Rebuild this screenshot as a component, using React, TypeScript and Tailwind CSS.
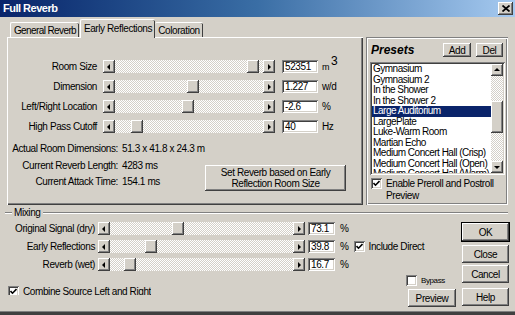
import React from 'react';

// classic win9x bevels
const raised = 'bg-[#d4d0c8] shadow-[inset_-1px_-1px_#404040,inset_1px_1px_#ffffff,inset_-2px_-2px_#808080]';
const sunken = 'bg-white shadow-[inset_1px_1px_#808080,inset_-1px_-1px_#ffffff,inset_2px_2px_#404040,inset_-2px_-2px_#d4d0c8]';
const track = 'bg-[image:repeating-conic-gradient(#d4d0c8_0_25%,#ffffff_0_50%)] bg-[length:2px_2px]';

const presets = [
  'Gymnasium',
  'Gymnasium 2',
  'In the Shower',
  'In the Shower 2',
  'Large Auditorium',
  'LargePlate',
  'Luke-Warm Room',
  'Martian Echo',
  'Medium Concert Hall (Crisp)',
  'Medium Concert Hall (Open)',
  'Medium Concert Hall (Warm)',
];

const reflections = [
  { label: 'Room Size', value: '52351', thumb: 132, unit: 'm3' },
  { label: 'Dimension', value: '1.227', thumb: 72, unit: 'w/d' },
  { label: 'Left/Right Location', value: '-2.6', thumb: 67, unit: '%' },
  { label: 'High Pass Cutoff', value: '40', thumb: 16, unit: 'Hz' },
];

const mixing = [
  { label: 'Original Signal (dry)', value: '73.1', thumb: 62 },
  { label: 'Early Reflections', value: '39.8', thumb: 35 },
  { label: 'Reverb (wet)', value: '16.7', thumb: 14 },
];

function Arrow({ dir, h = 13 }: { dir: 'left' | 'right' | 'up' | 'down'; h?: number }) {
  const pts = {
    left: '5,1 2,4 5,7',
    right: '3,1 6,4 3,7',
    up: '1,5 4,2 7,5',
    down: '1,3 4,6 7,3',
  }[dir];
  return (
    <div className={`flex w-[12px] shrink-0 items-center justify-center ${raised}`} style={{ height: h }}>
      <svg width="8" height="8" viewBox="0 0 8 8">
        <polygon points={pts} fill="#000" />
      </svg>
    </div>
  );
}

function Slider({ width, thumb }: { width: number; thumb: number }) {
  return (
    <div className="flex h-[13px]">
      <Arrow dir="left" />
      <div className={`flex h-[13px] ${track}`} style={{ width }}>
        <div className="shrink-0" style={{ width: thumb }} />
        <div className={`h-[13px] w-[12px] shrink-0 ${raised}`} />
      </div>
      <Arrow dir="right" />
    </div>
  );
}

function Check({ checked }: { checked?: boolean }) {
  return (
    <div className={`flex h-[11px] w-[11px] shrink-0 items-center justify-center ${sunken}`}>
      {checked && (
        <svg width="7" height="7" viewBox="0 0 7 7">
          <path d="M0.5 3 L2.5 5.2 L6.5 1" stroke="#000" strokeWidth="1.6" fill="none" />
        </svg>
      )}
    </div>
  );
}

function Btn({ children, className = '' }: { children: React.ReactNode; className?: string }) {
  return <div className={`flex items-center justify-center whitespace-nowrap ${raised} ${className}`}>{children}</div>;
}

export default function App() {
  return (
    <div className="flex h-[315px] w-[515px] flex-col overflow-hidden whitespace-nowrap bg-[#d4d0c8] font-['Liberation_Sans',Arial,sans-serif] text-[10px] tracking-[-0.4px] text-black">
      {/* title bar */}
      <div className="flex h-[17px] shrink-0 items-center bg-gradient-to-r from-[#0a246a] via-[#3a6ea5] to-[#a6caf0] pl-[3px] pr-[2px]">
        <span className="text-[11px] font-bold tracking-[-0.5px] text-white">Full Reverb</span>
        <div className={`ml-auto flex h-[13px] w-[15px] items-center justify-center ${raised}`}>
          <svg width="8" height="7" viewBox="0 0 8 7">
            <path d="M0.5 0.5 L7.5 6.5 M7.5 0.5 L0.5 6.5" stroke="#000" strokeWidth="1.7" />
          </svg>
        </div>
      </div>

      {/* top: tabs + presets */}
      <div className="flex shrink-0 pl-[7px] pt-[3px]">
        <div className="flex w-[356px] flex-col">
          <div className="flex h-[17px] items-end pl-[3px]">
            <div className="flex h-[15px] w-[69px] items-center justify-center rounded-t-[2px] border-l border-t border-white tracking-[-0.6px] shadow-[inset_-1px_0_#404040]">
              General Reverb
            </div>
            <div className="relative z-10 -mb-px ml-[1px] flex h-[19px] w-[75px] items-center justify-center rounded-t-[2px] border-l border-t border-white bg-[#d4d0c8] pb-[2px] shadow-[inset_-1px_0_#404040]">
              Early Reflections
            </div>
            <div className="flex h-[15px] w-[48px] items-center justify-center rounded-t-[2px] border-t border-white shadow-[inset_-1px_0_#404040]">
              Coloration
            </div>
          </div>
          <div className="flex h-[168px] flex-col shadow-[inset_1px_1px_#ffffff,inset_-1px_-1px_#404040,inset_-2px_-2px_#808080]">
            <div className="flex flex-col gap-[7px] pt-[23px]">
              {reflections.map((r) => (
                <div key={r.label} className="flex h-[13px] items-center">
                  <div className="w-[90px] text-right leading-[13px]">{r.label}</div>
                  <div className="ml-[6px]">
                    <Slider width={148} thumb={r.thumb} />
                  </div>
                  <div className={`ml-[7px] h-[13px] w-[36px] pl-[3px] leading-[13px] ${sunken}`}>{r.value}</div>
                  <div className="ml-[4px] leading-[13px]">
                    {r.unit === 'm3' ? (
                      <>
                        <span className="text-[9px]">m</span>
                        <span className="relative -top-[5px] ml-[2px] text-[12px]">3</span>
                      </>
                    ) : (
                      r.unit
                    )}
                  </div>
                </div>
              ))}
            </div>
            <div className="mt-[8px] flex">
              <div className="grid grid-cols-[111px_auto] gap-x-[4px] leading-[16px]">
                <div className="text-right">Actual Room Dimensions:</div>
                <div>51.3 x 41.8 x 24.3 m</div>
                <div className="text-right">Current Reverb Length:</div>
                <div>4283 ms</div>
                <div className="text-right">Current Attack Time:</div>
                <div>154.1 ms</div>
              </div>
              <Btn className="ml-auto mr-[17px] mt-[24px] h-[26px] w-[141px] flex-col leading-[11px]">
                <span>Set Reverb based on Early</span>
                <span>Reflection Room Size</span>
              </Btn>
            </div>
          </div>
        </div>

        {/* presets group */}
        <div className="ml-[3px] mt-[17px] flex h-[168px] w-[142px] flex-col shadow-[inset_1px_1px_#808080,inset_-1px_-1px_#ffffff,inset_2px_2px_#ffffff,inset_-2px_-2px_#808080]">
          <div className="flex h-[20px] items-end pl-[5px] pr-[5px]">
            <span className="text-[12px] font-bold italic leading-[14px] tracking-normal">Presets</span>
            <Btn className="ml-auto h-[14px] w-[28px]">Add</Btn>
            <Btn className="ml-[5px] h-[14px] w-[27px]">Del</Btn>
          </div>
          <div className={`ml-[4px] mt-[5px] flex h-[113px] w-[135px] p-[2px] ${sunken}`}>
            <div className="flex-1 overflow-hidden tracking-[-0.5px]">
              {presets.map((p) => (
                <div
                  key={p}
                  className={`h-[10.5px] pl-[1px] leading-[10.5px] ${
                    p === 'Large Auditorium' ? 'bg-[#0a246a] text-white' : ''
                  }`}
                >
                  {p}
                </div>
              ))}
            </div>
            <div className="flex w-[12px] flex-col">
              <Arrow dir="up" h={12} />
              <div className={`flex flex-1 flex-col ${track}`}>
                <div className="h-[25px]" />
                <div className={`h-[32px] ${raised}`} />
              </div>
              <Arrow dir="down" h={12} />
            </div>
          </div>
          <div className="ml-[5px] mt-[3px] flex items-start">
            <Check checked />
            <div className="ml-[4px] leading-[12px]">
              Enable Preroll and Postroll
              <br />
              Preview
            </div>
          </div>
        </div>
      </div>

      {/* mixing */}
      <div className="flex flex-1 flex-col pl-[5px] pr-[5px]">
        <div className="mt-[2px] flex h-[12px] items-center">
          <div className="h-[2px] w-[7px] border-b border-t border-b-white border-t-[#808080]" />
          <span className="px-[2px] leading-[12px]">Mixing</span>
          <div className="mr-[2px] h-[2px] flex-1 border-b border-t border-b-white border-t-[#808080]" />
        </div>
        <div className="mt-[3px] flex">
          <div className="flex flex-1 flex-col pr-[5px]">
            <div className="flex flex-col gap-[5px]">
              {mixing.map((m, i) => (
                <div key={m.label} className="flex h-[13px] items-center">
                  <div className="w-[90px] text-right leading-[13px]">{m.label}</div>
                  <div className="ml-[3px]">
                    <Slider width={183} thumb={m.thumb} />
                  </div>
                  <div className={`ml-[3px] h-[13px] w-[27px] pl-[3px] leading-[13px] ${sunken}`}>{m.value}</div>
                  <div className="ml-[5px] leading-[13px]">%</div>
                  {i === 1 && (
                    <div className="ml-[5px] flex items-center">
                      <Check checked />
                      <span className="ml-[4px]">Include Direct</span>
                    </div>
                  )}
                </div>
              ))}
            </div>
            <div className="flex items-start justify-between">
              <div className="mt-[15px] flex h-[9px] items-start overflow-hidden pl-[3px]">
                <Check checked />
                <span className="ml-[4px] leading-[11px]">Combine Source Left and Right</span>
              </div>
              <div className="mt-[4px] flex flex-col items-end">
                <div className="flex w-[50px] items-center">
                  <Check />
                  <span className="ml-[4px] text-[8px] leading-[10px]">Bypass</span>
                </div>
                <Btn className="mt-[3px] h-[18px] w-[48px]">Preview</Btn>
              </div>
            </div>
          </div>
          <div className="flex w-[49px] flex-col">
            <div className="h-[20px] border border-black">
              <Btn className="h-full w-full">OK</Btn>
            </div>
            <Btn className="mx-px mt-[3px] h-[18px]">Close</Btn>
            <Btn className="mx-px mt-[2px] h-[18px]">Cancel</Btn>
            <Btn className="mx-px mt-[5px] h-[18px]">Help</Btn>
          </div>
        </div>
      </div>
      <div className="h-[4px] shrink-0 border-t border-[#808080] bg-[#404040]" />
    </div>
  );
}
